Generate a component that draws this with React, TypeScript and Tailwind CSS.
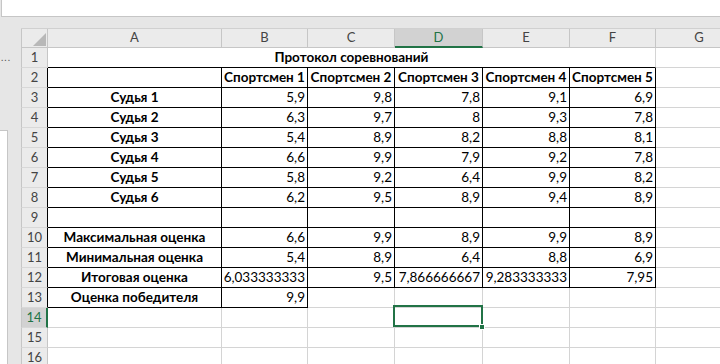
import React from "react";

type Cell = { t?: string; bold?: boolean; align?: "left" | "center" | "right" };

const colWidths = [
  "w-[174px]",
  "w-[86px]",
  "w-[87px]",
  "w-[88px]",
  "w-[87px]",
  "w-[86px]",
  "w-[87px]",
];

const letters = ["A", "B", "C", "D", "E", "F", "G"];

const judges: [string, string[]][] = [
  ["Судья 1", ["5,9", "9,8", "7,8", "9,1", "6,9"]],
  ["Судья 2", ["6,3", "9,7", "8", "9,3", "7,8"]],
  ["Судья 3", ["5,4", "8,9", "8,2", "8,8", "8,1"]],
  ["Судья 4", ["6,6", "9,9", "7,9", "9,2", "7,8"]],
  ["Судья 5", ["5,8", "9,2", "6,4", "9,9", "8,2"]],
  ["Судья 6", ["6,2", "9,5", "8,9", "9,4", "8,9"]],
];

const labelRow = (label: string, nums: string[]): Cell[] => [
  { t: label, bold: true, align: "center" },
  ...nums.map((n) => ({ t: n, align: "right" as const })),
];

// rows 2..16 (row 1 is merged, drawn separately)
const rows: Cell[][] = [
  [{}, ...[1, 2, 3, 4, 5].map((i) => ({ t: `Спортсмен ${i}`, bold: true, align: "center" as const }))],
  ...judges.map(([l, n]) => labelRow(l, n)),
  [],
  labelRow("Максимальная оценка", ["6,6", "9,9", "8,9", "9,9", "8,9"]),
  labelRow("Минимальная оценка", ["5,4", "8,9", "6,4", "8,8", "6,9"]),
  labelRow("Итоговая оценка", ["6,033333333", "9,5", "7,866666667", "9,283333333", "7,95"]),
  [{ t: "Оценка победителя", bold: true, align: "center" }, { t: "9,9", align: "right" }],
  [],
  [],
  [],
];

// black borders for the table A2:F12 and A13:B13
function isBoxed(row: number, col: number) {
  if (row >= 2 && row <= 12) return col <= 5;
  if (row === 13) return col <= 1;
  return false;
}

function hasBlackBottom(row: number, col: number) {
  if (row === 1) return col <= 5;
  return isBoxed(row, col);
}

function RowHeader({ n }: { n: number }) {
  const sel = n === 14;
  const dark = n >= 2 && n <= 13;
  return (
    <div
      className={
        "w-[27px] shrink-0 h-full flex items-center justify-center border-l border-l-[#c6c6c6] border-b border-b-[#d8d8d8] text-[13px] " +
        (sel
          ? "bg-[#d2d2d2] text-[#217346] border-r-2 border-r-[#217346]"
          : dark
          ? "bg-[#ebebeb] text-[#444] border-r border-r-black"
          : "bg-[#ebebeb] text-[#444] border-r border-r-[#c6c6c6]")
      }
    >
      {n}
    </div>
  );
}

function SheetRow({ n, cells }: { n: number; cells: Cell[] }) {
  return (
    <div className="flex h-[20px]">
      <RowHeader n={n} />
      {colWidths.map((w, c) => {
        const cell = cells[c] || {};
        const right = isBoxed(n, c) ? "border-r-black" : "border-r-[#d4d4d4]";
        const bottom = hasBlackBottom(n, c) ? "border-b-black" : "border-b-[#d4d4d4]";
        const align =
          cell.align === "center" ? "justify-center" : cell.align === "right" ? "justify-end pr-[2px]" : "justify-start pl-[2px]";
        return (
          <div
            key={c}
            className={`${w} shrink-0 h-full flex items-end pb-[1px] border-r border-b bg-white whitespace-nowrap overflow-hidden ${right} ${bottom} ${align}`}
          >
            <span className={`leading-[17px] text-[13.5px] text-black ${cell.bold ? "font-bold" : ""}`}>{cell.t}</span>
          </div>
        );
      })}
    </div>
  );
}

export default function App() {
  return (
    <div className="w-[720px] h-[364px] overflow-hidden bg-[#e6e6e6] flex flex-col font-['Lato',sans-serif]">
      {/* formula bar strip */}
      <div className="h-[17px] shrink-0 ml-[1px] bg-white border-l border-b border-[#c6c6c6]" />

      <div className="flex flex-1 min-h-0">
        {/* left margin */}
        <div className="w-[21px] shrink-0 flex flex-col">
          <div className="h-[36px] shrink-0" />
          <div className="h-[10px] pl-[1px] text-[10px] leading-[8px] text-[#555] tracking-[1px]">...</div>
          <div className="h-[67px] shrink-0" />
          <div className="w-[8px] flex-1 bg-white border-t border-r border-[#c6c6c6]" />
        </div>

        {/* sheet */}
        <div className="relative flex flex-col pt-[11px]">
          {/* column headers */}
          <div className="flex h-[20px] border-t border-[#d0d0d0]">
            <div className="w-[27px] shrink-0 h-full bg-[#ebebeb] border-l border-r border-b border-[#c6c6c6] flex items-end justify-end pr-[1px] pb-[1px]">
              <svg width="13" height="13" viewBox="0 0 13 13">
                <polygon points="13,0 13,13 0,13" fill="#b8b8b8" />
              </svg>
            </div>
            {colWidths.map((w, c) => (
              <div
                key={c}
                className={
                  `${w} shrink-0 h-full flex items-center justify-center text-[13px] border-r border-r-[#c6c6c6] ` +
                  (letters[c] === "D"
                    ? "bg-[#d2d2d2] text-[#217346] border-b-2 border-b-[#217346]"
                    : "bg-[#ebebeb] text-[#444] border-b border-b-[#c6c6c6]")
                }
              >
                {letters[c]}
              </div>
            ))}
          </div>

          {/* row 1, merged A1:F1 */}
          <div className="flex h-[20px]">
            <RowHeader n={1} />
            <div className="w-[608px] shrink-0 h-full flex items-end justify-center pb-[1px] bg-white border-r border-r-[#d4d4d4] border-b border-b-black">
              <span className="leading-[17px] text-[13.5px] font-bold text-black">Протокол соревнований</span>
            </div>
            <div className="w-[87px] shrink-0 h-full bg-white border-r border-b border-[#d4d4d4]" />
          </div>

          {rows.map((cells, i) => (
            <SheetRow key={i} n={i + 2} cells={cells} />
          ))}

          {/* selected cell D14 */}
          <div className="absolute left-[372px] top-[288px] w-[90px] h-[22px] border-2 border-[#217346]" />
          <div className="absolute left-[458px] top-[307px] w-[6px] h-[6px] bg-[#217346] border border-white" />
        </div>
      </div>
    </div>
  );
}
